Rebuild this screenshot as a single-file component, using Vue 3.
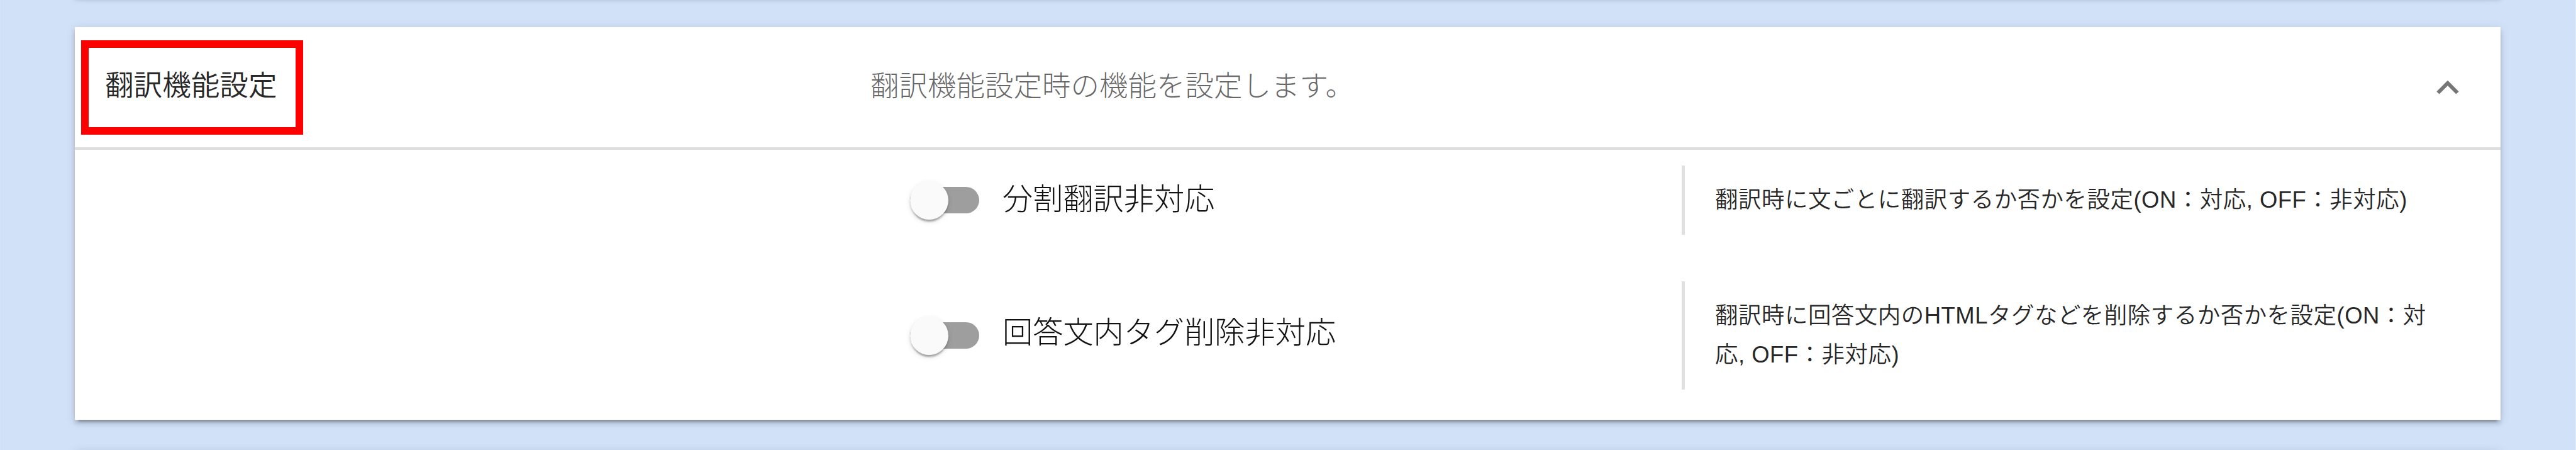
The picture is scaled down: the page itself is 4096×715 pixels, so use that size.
<script setup>
import { ref } from "vue";

const isOpen = ref(true);

const settings = ref([
  {
    id: "split",
    label: "分割翻訳非対応",
    note: "翻訳時に文ごとに翻訳するか否かを設定(ON：対応, OFF：非対応)",
  },
  {
    id: "tag",
    label: "回答文内タグ削除非対応",
    note: "翻訳時に回答文内のHTMLタグなどを削除するか否かを設定(ON：対応, OFF：非対応)",
  },
]);
</script>

<template>
  <main class="page">
    <div class="panel panel-prev"></div>
    <section class="panel panel-main">
      <header class="panel-header" @click="isOpen = !isOpen">
        <div class="title-box">
          <h3>翻訳機能設定</h3>
        </div>
        <p class="description">翻訳機能設定時の機能を設定します。</p>
        <svg class="chevron" viewBox="0 0 36 24">
          <path d="M2.5 20.5 L18 5 L33.5 20.5" />
        </svg>
      </header>
      <ul v-if="isOpen" class="panel-body">
        <li
          class="setting"
          :class="setting.id"
          v-for="setting in settings"
          :key="setting.id"
        >
          <div class="toggle">
            <span class="track"><span class="thumb"></span></span>
            <span class="label">{{ setting.label }}</span>
          </div>
          <div class="note">
            <p>{{ setting.note }}</p>
          </div>
        </li>
      </ul>
    </section>
    <div class="panel panel-next"></div>
  </main>
</template>

<style>
body {
  margin: 0;
  background: #d1e1f7;
}
</style>

<style scoped>
* {
  margin: 0;
  padding: 0;
  box-sizing: border-box;
}

.page {
  width: 4096px;
  height: 715px;
  overflow: hidden;
  display: flex;
  flex-direction: column;
  padding: 0 119px 0 118px;
  background: #d1e1f7;
  border-left: 1px solid #d8e3f4;
  border-right: 1px solid #e6ecf6;
  font-family: "Liberation Sans", "Noto Sans CJK JP", sans-serif;
  font-weight: 350;
  color: rgba(0, 0, 0, 0.87);
}
.panel {
  flex: none;
  background: #fff;
  box-shadow: 0 9px 3px -6px rgba(0, 0, 0, 0.2),
    0 6px 6px 0 rgba(0, 0, 0, 0.14), 0 3px 15px 0 rgba(0, 0, 0, 0.12);
}

/* neighbouring panels, only their shadows reach the view */
.panel-prev {
  height: 40px;
  margin-top: -47px;
}
.panel-main {
  height: 624px;
  margin-top: 50px;
}
.panel-next {
  height: 40px;
  margin-top: 48px;
}

.panel-header {
  height: 195px;
  display: flex;
  align-items: center;
  border-bottom: 4px solid #dddddd;
  padding: 0 66px 0 10px;
  cursor: pointer;
}
.title-box {
  width: 353px;
  height: 150px;
  border: 12px solid #f00;
  display: flex;
  align-items: center;
  padding-left: 26px;
}
.title-box h3 {
  font-size: 45.6px;
  font-weight: 350;
  line-height: 60px;
  white-space: nowrap;
  margin-top: -3px;
}
.description {
  margin-left: 902px;
  margin-top: -2px;
  font-size: 45.5px;
  font-weight: 300;
  line-height: 60px;
  color: rgba(0, 0, 0, 0.6);
  white-space: nowrap;
}
.chevron {
  width: 36px;
  height: 24px;
  margin-left: auto;
}
.chevron path {
  fill: none;
  stroke: #757575;
  stroke-width: 6;
}

.panel-body {
  list-style: none;
  padding: 25px 0 0 1328px;
  display: flex;
  flex-direction: column;
  gap: 74px;
}
.setting {
  display: grid;
  grid-template-columns: 1227px 1fr;
  align-items: center;
}
.toggle {
  display: flex;
  align-items: center;
}
.track {
  width: 110px;
  height: 42px;
  border-radius: 24px;
  background: #9e9e9e;
  display: flex;
  align-items: center;
}
.thumb {
  flex: none;
  width: 61px;
  height: 61px;
  border-radius: 50%;
  background: #fafafa;
  box-shadow: 0 6px 3px -3px rgba(0, 0, 0, 0.2),
    0 3px 3px 0 rgba(0, 0, 0, 0.14), 0 3px 9px 0 rgba(0, 0, 0, 0.12);
}
.label {
  margin-left: 37px;
  font-size: 48.2px;
  font-weight: 300;
  color: #111;
  line-height: 60px;
  white-space: nowrap;
  padding-bottom: 4px;
}
.tag .label {
  padding-bottom: 10px;
}
.note {
  min-height: 110px;
  border-left: 5px solid #e0e0e0;
  padding: 24px 0 24px 48px;
  display: flex;
  align-items: center;
}
.tag .note {
  min-height: 172px;
}
.note p {
  width: 1150px;
  font-size: 36.5px;
  letter-spacing: 0.47px;
  line-height: 62px;
}
</style>
